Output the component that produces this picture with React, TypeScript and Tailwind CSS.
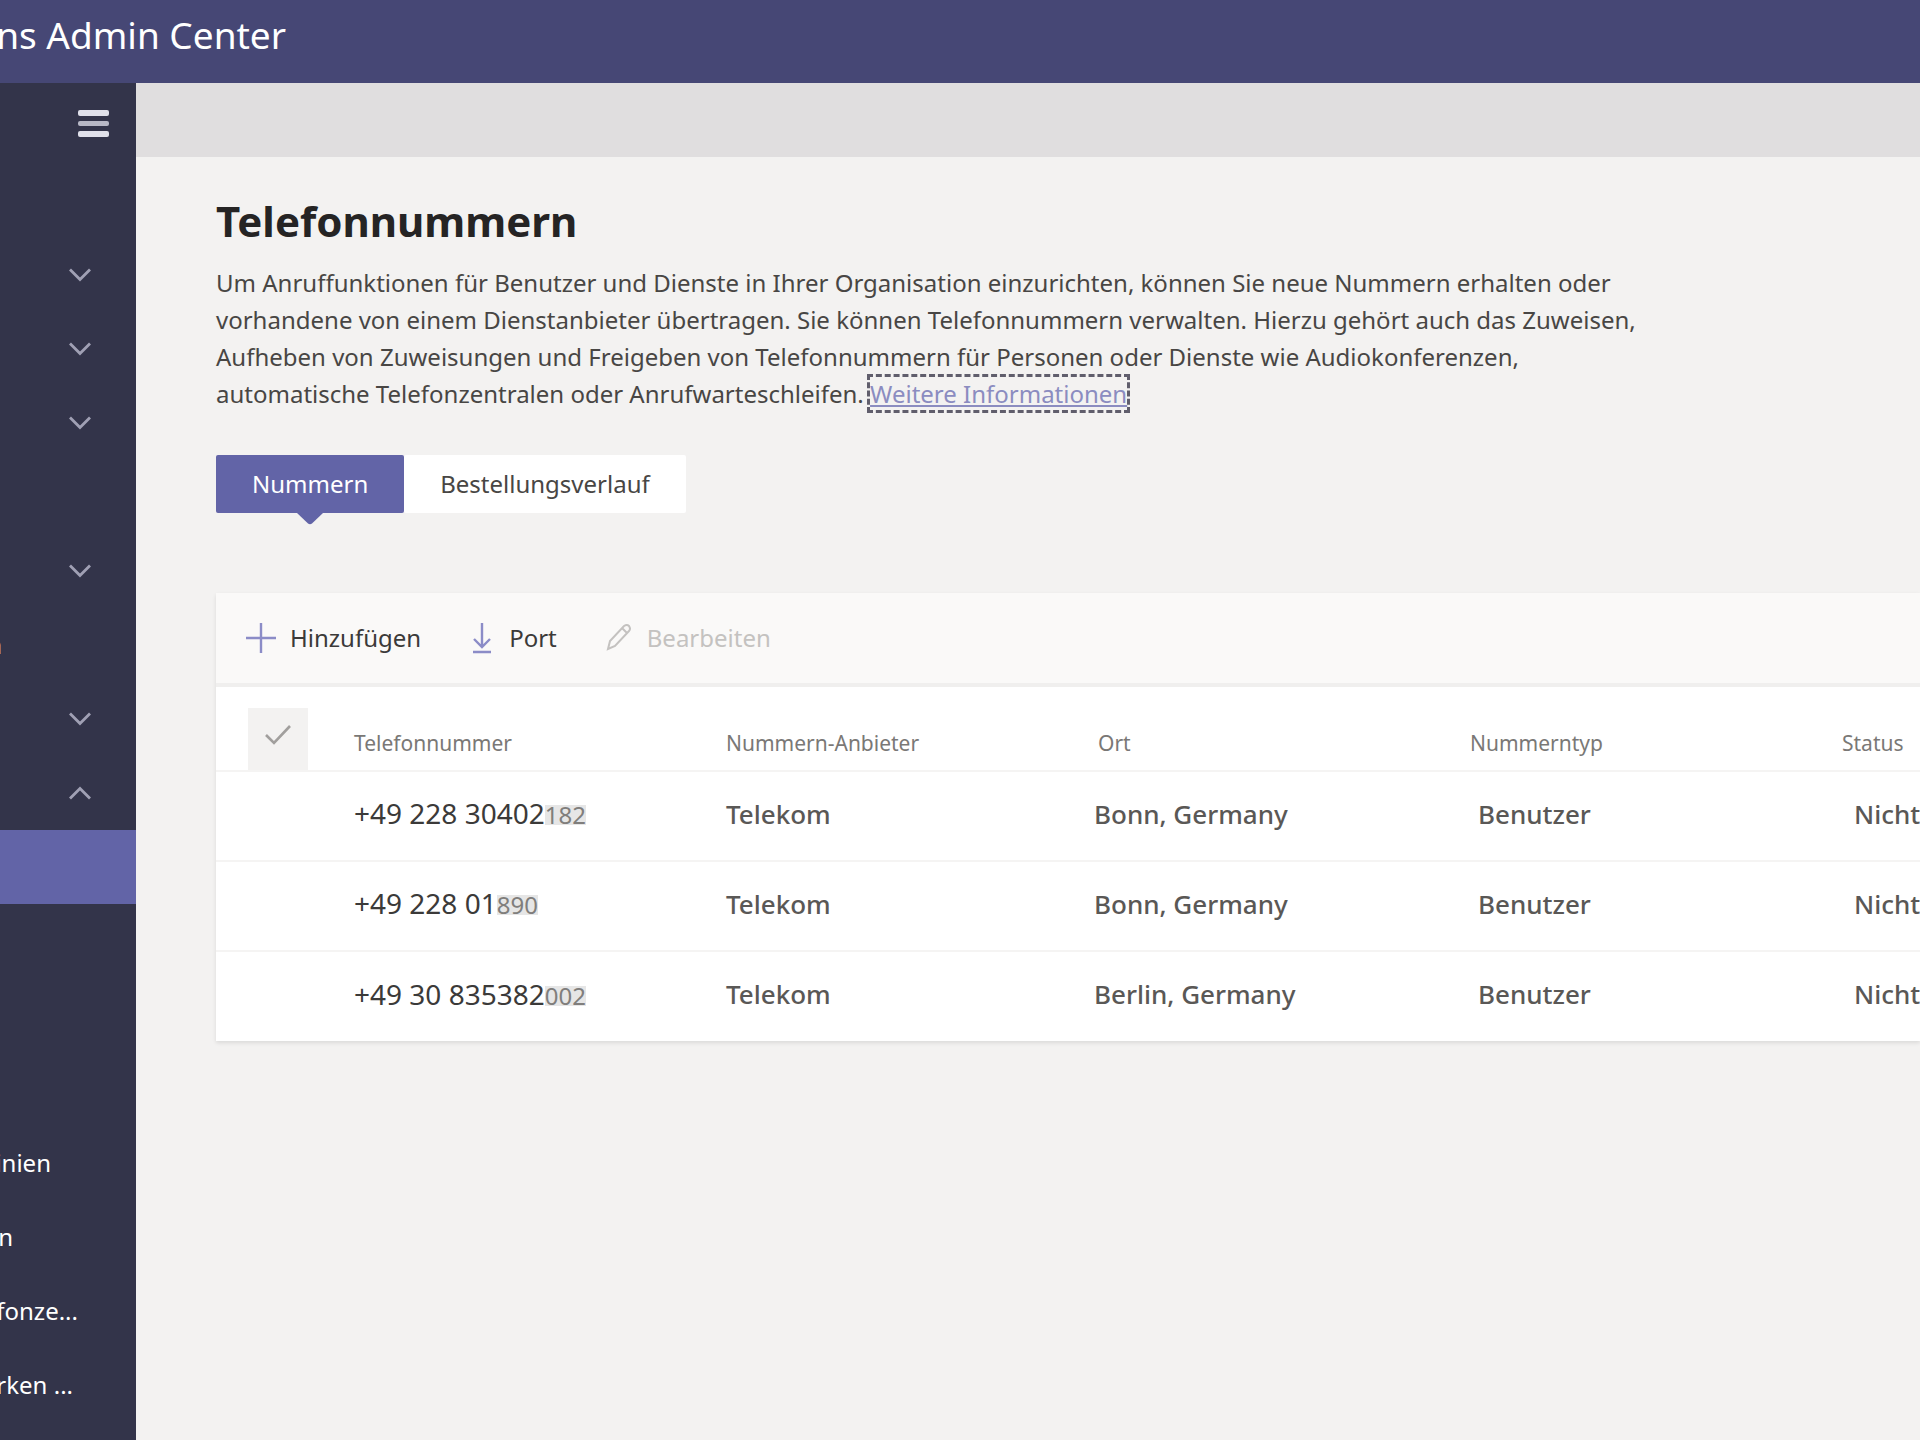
import { ReactNode, useState } from "react";
import { clsx } from "clsx";

type NavItem = {
  id: string;
  label?: string;
  labelWidth?: string;
  chevron?: "up" | "down";
  active?: boolean;
};

const navItems: NavItem[] = [
  { id: "dashboard" },
  { id: "teams", chevron: "down" },
  { id: "devices", chevron: "down" },
  { id: "locations", chevron: "down" },
  { id: "users" },
  { id: "meetings", chevron: "down" },
  { id: "messaging", label: "n", labelWidth: "w-[2px]" },
  { id: "apps", chevron: "down" },
  { id: "voice", chevron: "up" },
  { id: "numbers", active: true },
  { id: "emergency" },
  { id: "dialplans" },
  { id: "routing" },
  { id: "policies", label: "inien", labelWidth: "w-[51px]" },
  { id: "queues", label: "n", labelWidth: "w-[13px]" },
  { id: "attendants", label: "fonze...", labelWidth: "w-[78px]" },
  { id: "park", label: "rken ...", labelWidth: "w-[73px]" },
];

const numbers = [
  { number: "+49 228 30402", masked: "182", city: "Bonn, Germany" },
  { number: "+49 228 01", masked: "890", city: "Bonn, Germany" },
  { number: "+49 30 835382", masked: "002", city: "Berlin, Germany" },
];

const tabs = ["Nummern", "Bestellungsverlauf"];

const Chevron = ({ up }: { up?: boolean }) => (
  <svg
    viewBox="0 0 24 14"
    className={clsx("h-[14px] w-[24px]", up && "rotate-180")}
    fill="none"
    stroke="#a0a0b4"
    strokeWidth="2.8"
  >
    <path d="M2 1.5 L12 11.5 L22 1.5" />
  </svg>
);

const Sidebar = () => (
  <nav className="w-[136px] shrink-0 overflow-hidden bg-[#33344a] text-white">
    <div className="flex h-[81px] items-center justify-end pr-[27px]">
      <button type="button" aria-label="Menü" className="flex flex-col gap-[5px]">
        <span className="h-[6px] w-[31px] rounded-xs bg-[#e0e0ea]" />
        <span className="h-[5px] w-[31px] rounded-xs bg-[#b8b8c6]" />
        <span className="h-[6px] w-[31px] rounded-xs bg-[#e0e0ea]" />
      </button>
    </div>
    <ul>
      {navItems.map((item) => (
        <li key={item.id}>
          <button
            type="button"
            aria-label={item.label ? undefined : item.id}
            className={clsx(
              "flex h-[74px] w-full items-center",
              item.active && "bg-[#6264a7]"
            )}
          >
            {item.label && (
              <span
                className={clsx(
                  "flex shrink-0 justify-end whitespace-pre",
                  item.labelWidth
                )}
              >
                <span className="shrink-0">{item.label}</span>
              </span>
            )}
            {item.chevron && (
              <span className="ml-[68px]">
                <Chevron up={item.chevron === "up"} />
              </span>
            )}
          </button>
        </li>
      ))}
    </ul>
  </nav>
);

const ToolbarButton = ({
  icon,
  children,
  disabled,
}: {
  icon: ReactNode;
  children: ReactNode;
  disabled?: boolean;
}) => (
  <button
    type="button"
    disabled={disabled}
    className={clsx(
      "flex items-center gap-[14px]",
      disabled ? "text-[#c4c2c0]" : "text-[#3b3a39]"
    )}
  >
    {icon}
    {children}
  </button>
);

const App = () => {
  const [tab, setTab] = useState("Nummern");

  return (
    <div className="flex min-h-screen flex-col overflow-x-hidden bg-[#f3f2f1] font-['Noto_Sans','Open_Sans',sans-serif] text-2xl text-[#484644]">
      <header className="flex h-[83px] items-center bg-[#464775] pb-[14px] text-white">
        <div className="flex w-[286px] justify-end">
          <span className="shrink-0 text-[37px]">ns Admin Center</span>
        </div>
      </header>

      <div className="flex flex-1">
        <Sidebar />

        <main className="min-w-0 flex-1">
          <div className="h-[74px] bg-[#e0dedf]" />

          <div className="pt-[38px] pl-[80px]">
            <h1 className="text-[42px] leading-[52px] font-bold text-[#252424]">
              Telefonnummern
            </h1>
            <p className="mt-[17px] leading-[37px]">
              Um Anruffunktionen für Benutzer und Dienste in Ihrer Organisation
              einzurichten, können Sie neue Nummern erhalten oder
              <br />
              vorhandene von einem Dienstanbieter übertragen. Sie können
              Telefonnummern verwalten. Hierzu gehört auch das Zuweisen,
              <br />
              Aufheben von Zuweisungen und Freigeben von Telefonnummern für
              Personen oder Dienste wie Audiokonferenzen,
              <br />
              automatische Telefonzentralen oder Anrufwarteschleifen.{" "}
              <a
                href="#info"
                className="text-[#8b8cc0] underline outline-3 outline-dashed outline-[#605e6c]"
              >
                Weitere Informationen
              </a>
            </p>

            <div role="tablist" className="mt-[43px] flex">
              {tabs.map((name) => (
                <button
                  key={name}
                  type="button"
                  role="tab"
                  aria-selected={tab === name}
                  onClick={() => setTab(name)}
                  className={clsx(
                    "relative h-[58px] rounded-xs px-[36px]",
                    tab === name ? "bg-[#6264a7] text-white" : "bg-white"
                  )}
                >
                  {name}
                  {tab === name && (
                    <svg
                      viewBox="0 0 26 12"
                      className="absolute top-full left-1/2 h-[12px] w-[26px] -translate-x-1/2"
                      fill="#6264a7"
                    >
                      <path d="M0 0 H26 L15 10.5 Q13 12 11 10.5 Z" />
                    </svg>
                  )}
                </button>
              ))}
            </div>

            <section className="mt-[80px] bg-white shadow-[0_2px_4px_rgba(0,0,0,0.1)]">
              <div className="flex h-[94px] items-center gap-[48px] border-b-4 border-[#f0efee] bg-[#faf9f8] pl-[30px]">
                <ToolbarButton
                  icon={
                    <svg viewBox="0 0 30 30" className="size-[30px]" stroke="#8b8cc7" strokeWidth="2.4">
                      <path d="M15 0 V30 M0 15 H30" />
                    </svg>
                  }
                >
                  Hinzufügen
                </ToolbarButton>
                <ToolbarButton
                  icon={
                    <svg viewBox="0 0 26 32" className="h-8 w-[26px]" fill="none" stroke="#8b8cc7" strokeWidth="2.4">
                      <path d="M13 1 V25 M5 17 L13 25 L21 17 M4 30 H22" />
                    </svg>
                  }
                >
                  Port
                </ToolbarButton>
                <ToolbarButton
                  disabled
                  icon={
                    <svg viewBox="0 0 28 30" className="h-[30px] w-[28px]" fill="none" stroke="#c4c2c0" strokeWidth="2">
                      <path d="M3 26 L5 18 L19 3 Q22 1 24 3 Q26 6 24 8 L10 23 Z M17 5 L22 10" />
                    </svg>
                  }
                >
                  Bearbeiten
                </ToolbarButton>
              </div>

              <table className="w-full table-fixed border-collapse text-left">
                <colgroup>
                  <col className="w-[122px]" />
                  <col className="w-[372px]" />
                  <col className="w-[372px]" />
                  <col className="w-[372px]" />
                  <col className="w-[372px]" />
                  <col />
                </colgroup>
                <thead>
                  <tr className="h-[84px] border-b-2 border-[#f5f4f3] text-[21px] text-[#7a7876]">
                    <th className="pl-[32px] align-bottom">
                      <button
                        type="button"
                        aria-label="Alle auswählen"
                        className="flex h-[62px] w-[60px] items-center justify-center bg-[#f3f2f1] pb-[8px]"
                      >
                        <svg viewBox="0 0 26 20" className="h-[20px] w-[26px]" fill="none" stroke="#a19f9d" strokeWidth="2.6">
                          <path d="M1 10 L9 18 L25 1" />
                        </svg>
                      </button>
                    </th>
                    <th className="pt-7 pl-4 font-normal">Telefonnummer</th>
                    <th className="pt-7 pl-4 font-normal">Nummern-Anbieter</th>
                    <th className="pt-7 pl-4 font-normal">Ort</th>
                    <th className="pt-7 pl-4 font-normal">Nummerntyp</th>
                    <th className="pt-7 pl-4 font-normal">Status</th>
                  </tr>
                </thead>
                <tbody>
                  {numbers.map((row) => (
                    <tr
                      key={row.number}
                      className="h-[90px] border-b-2 border-[#f5f4f3] text-[26px] font-medium whitespace-nowrap text-[#5a5856] last:border-b-0"
                    >
                      <td />
                      <td className="pb-1 pl-4 text-[28px] font-normal text-[#3b3a39]">
                        {row.number}
                        <span className="inline-block bg-[#e6e6e6] text-2xl leading-5 text-[#807e7c]">
                          {row.masked}
                        </span>
                      </td>
                      <td className="pb-1 pl-4">Telekom</td>
                      <td className="pb-1 pl-3">{row.city}</td>
                      <td className="pb-1 pl-6">Benutzer</td>
                      <td className="pb-1 pl-7">Nicht</td>
                    </tr>
                  ))}
                </tbody>
              </table>
            </section>
          </div>
        </main>
      </div>
    </div>
  );
};

export default App;
